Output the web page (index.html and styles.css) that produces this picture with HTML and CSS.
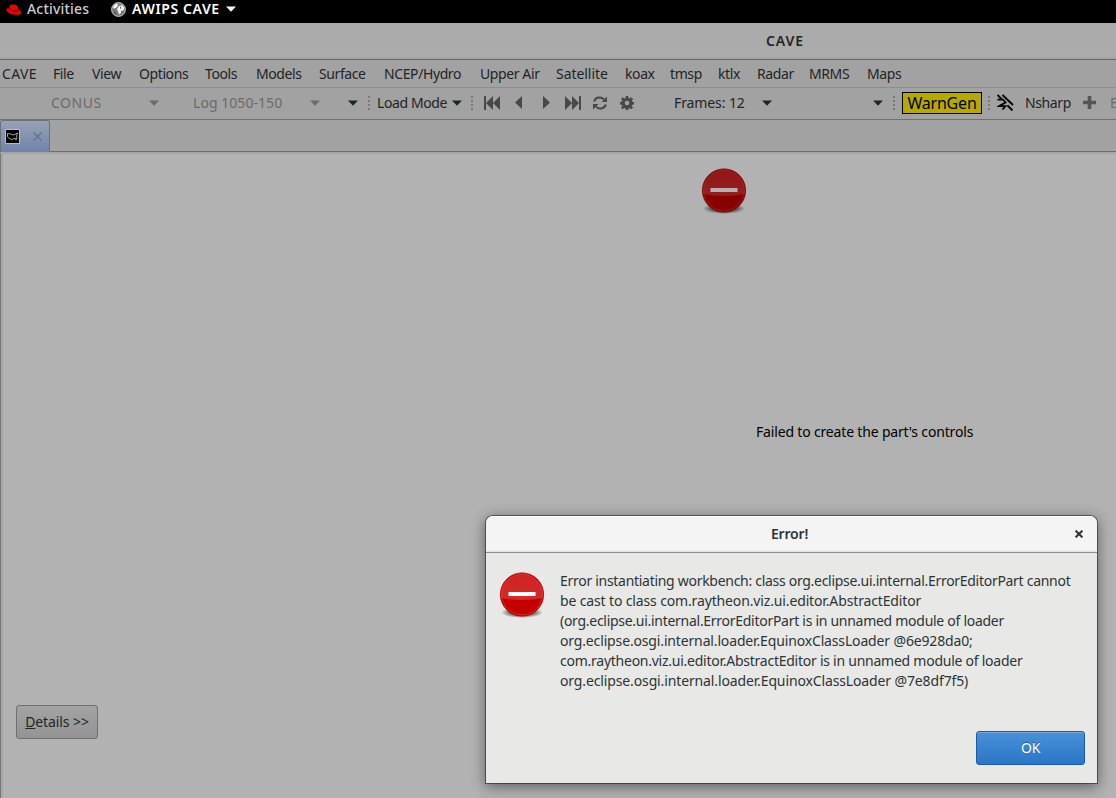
FILE: index.html
```html
<!DOCTYPE html>
<html lang="en">
<head>
<meta charset="utf-8">
<title>CAVE</title>
<link rel="stylesheet" href="styles.css">
</head>
<body>
<svg class="defs" width="0" height="0">
  <defs>
    <linearGradient id="red" x1="0" y1="0" x2="0" y2="1"><stop offset="0" stop-color="#d02222"/><stop offset="1" stop-color="#d62a2a"/></linearGradient>
    <radialGradient id="shade"><stop offset="0.6" stop-color="#000" stop-opacity=".5"/><stop offset="1" stop-color="#000" stop-opacity="0"/></radialGradient>
    <symbol id="stop" viewBox="0 0 46 48">
      <ellipse cx="23" cy="41.500" rx="21" ry="5.500" fill="url(#shade)"/>
      <circle cx="23" cy="23.500" r="21.600" fill="#c40000" stroke="#a60000" stroke-width=".8"/>
      <path d="M2.200 27a21 21 0 1 1 41.600 0Q23 31 2.200 27z" fill="url(#red)"/>
      <circle cx="23" cy="23.500" r="20.400" fill="none" stroke="#e54848" stroke-opacity=".6" stroke-width=".9"/>
      <path d="M9.500 21h27v4h-27z" fill="#fff"/>
    </symbol>
    <symbol id="down" viewBox="0 0 10 6"><path d="M0 .5h10L5 5.800z" fill="currentColor"/></symbol>
  </defs>
</svg>
<div class="screen">
  <header class="topbar">
    <svg class="hat" width="16" height="12" viewBox="0 0 16 12"><path d="M4 1.200C5 .2 6 .6 7 .9c1-.7 3-.6 4 .6.700 1 1 2.500 1.300 4 2 .6 3.200 2 2.900 3.300-.4 1.800-3.700 2.500-7.500 1.800C3.600 9.800.2 7.700.3 5.600.4 4.600 1.600 4.200 3 4.200z" fill="#e00"/><path d="M3.100 4.500c1.300 2 5.800 3.400 8.900 2.500" fill="none" stroke="#300" stroke-width=".8"/></svg>
    <span class="t activities">Activities</span>
    <svg class="globe" width="15" height="15" viewBox="0 0 15 15"><circle cx="7.500" cy="7.500" r="6.900" fill="#777" stroke="#ccc"/><path d="M3 3l3-1.500 1 1.500-1 2-2 1.500L2 6zM8 4l3-1 2.500 3-1.500 3-2-.5V11l-2 1.500-1-3L6 7z" fill="#f4f4f4"/><path d="M3 9l2 2-1 1.200zM9 4l1 2-1 1z" fill="#333"/></svg>
    <span class="t app">AWIPS CAVE</span>
    <svg class="arrow" width="10" height="6"><use href="#down"/></svg>
  </header>
  <div class="titlebar"><span class="t">CAVE</span></div>
  <nav class="menu">
    <span class="t m1">CAVE</span><span class="t">File</span><span class="t">View</span><span class="t">Options</span><span class="t">Tools</span><span class="t">Models</span><span class="t">Surface</span><span class="t">NCEP/Hydro</span><span class="t">Upper Air</span><span class="t m10">Satellite</span><span class="t">koax</span><span class="t">tmsp</span><span class="t">ktlx</span><span class="t">Radar</span><span class="t">MRMS</span><span class="t">Maps</span>
  </nav>
  <div class="toolbar">
    <span class="t dim conus">CONUS</span>
    <svg class="dim" width="10" height="6"><use href="#down"/></svg>
    <span class="t dim log">Log 1050-150</span>
    <svg class="dim" width="10" height="6"><use href="#down"/></svg>
    <svg width="10" height="6"><use href="#down"/></svg>
    <i class="grip"></i>
    <span class="t load">Load Mode</span>
    <svg width="10" height="6"><use href="#down"/></svg>
    <i class="grip"></i>
    <svg class="tool" width="16" height="14" viewBox="0 0 16 14"><path d="M0 0h2v14H0zM9 0v14L2 7zM16 0v14L9 7z"/></svg>
    <svg class="tool" width="7" height="13" viewBox="0 0 7 13"><path d="M7 0v13L0 6.500z"/></svg>
    <svg class="tool" width="7" height="13" viewBox="0 0 7 13"><path d="M0 0v13l7-6.500z"/></svg>
    <svg class="tool" width="16" height="14" viewBox="0 0 16 14"><path d="M16 0h-2v14h2zM7 0v14l7-7zM0 0v14l7-7z"/></svg>
    <svg class="tool" width="14" height="14" viewBox="0 0 14 14"><path d="M1.200 5.500C2.400 1 8 .2 11 3.400M12.800 8.500C11.600 13 6 13.800 3 10.600" fill="none" stroke="#484848" stroke-width="2.100"/><path d="M14 .5v5.500H8.500zM0 13.500V8h5.500z"/></svg>
    <svg class="tool" width="14" height="14" viewBox="0 0 14 14"><path fill-rule="evenodd" d="M5.800 0h2.400l.4 1.900 1.200.5L11.400 1.300l1.700 1.700-1.200 1.600.5 1.200 1.600.3v2.300l-1.700.4-.5 1.200 1.200 1.700-1.700 1.600-1.600-1.200-1.200.5-.3 1.400H5.900l-.4-1.500-1.200-.5-1.700 1.200L1 11.600l1.200-1.700-.5-1.100L0 8.400V6l1.700-.3.500-1.200L1 3l1.700-1.700 1.600 1.100 1.200-.5zM7 4.700A2.300 2.300 0 1 0 7 9.300 2.300 2.300 0 1 0 7 4.700z"/></svg>
    <span class="t frames">Frames: 12</span>
    <svg width="10" height="6"><use href="#down"/></svg>
    <svg width="10" height="6"><use href="#down"/></svg>
    <i class="grip"></i>
    <span class="t warngen">WarnGen</span>
    <i class="grip"></i>
    <svg width="17" height="17" viewBox="0 0 17 17"><path d="M.5 1L5 5.500M5.500 1L16 11M.5 5.700h5.500L8.500 8.500 2 12.200h6.500L5.500 15.500M10.500 11.500l5 5" fill="none" stroke="#000" stroke-width="1.800"/></svg>
    <span class="t nsharp">Nsharp</span>
    <svg class="tool" width="13" height="13" viewBox="0 0 13 13"><path d="M4.700 0h3.600v4.700H13v3.600H8.300V13H4.700V8.300H0V4.700h4.700z" fill="#555"/></svg>
    <span class="t dim">B</span>
  </div>
  <div class="tabs">
    <div class="tab">
      <svg width="15" height="15" viewBox="0 0 15 15"><path d="M.5.500h14v14H.5z" fill="#000" stroke="#bbb"/><path d="M2.500 4.500l3 .5 3 1 2-1 2-1-1 3 .5 2-1 2-1-2-2 1-1 .5-3-1-1.500-2z" fill="none" stroke="#c8c8c8" stroke-width=".8"/></svg>
      <svg width="9" height="9" viewBox="0 0 9 9"><path d="M.5.500l8 8M8.500.500l-8 8" stroke="#65707f" stroke-width="1.100"/></svg>
    </div>
  </div>
  <main class="part">
    <svg class="part-icon" width="46" height="48"><use href="#stop"/></svg>
    <p class="t part-msg">Failed to create the part's controls</p>
    <button class="details"><span class="t"><u>D</u>etails &gt;&gt;</span></button>
  </main>
</div>
<section class="dialog">
  <div class="dialog-title">
    <span class="t">Error!</span>
    <svg width="8" height="8" viewBox="0 0 8 8"><path d="M.6.600l6.800 6.800M7.400.600L.6 7.400" stroke="#2e3436" stroke-width="2"/></svg>
  </div>
  <div class="dialog-body">
    <svg width="46" height="48"><use href="#stop"/></svg>
    <div class="lines">
      <span class="t l1">Error instantiating workbench: class org.eclipse.ui.internal.ErrorEditorPart cannot</span>
      <span class="t l2">be cast to class com.raytheon.viz.ui.editor.AbstractEditor</span>
      <span class="t l3">(org.eclipse.ui.internal.ErrorEditorPart is in unnamed module of loader</span>
      <span class="t l4">org.eclipse.osgi.internal.loader.EquinoxClassLoader @6e928da0;</span>
      <span class="t l5">com.raytheon.viz.ui.editor.AbstractEditor is in unnamed module of loader</span>
      <span class="t l6">org.eclipse.osgi.internal.loader.EquinoxClassLoader @7e8df7f5)</span>
    </div>
  </div>
  <button class="ok"><span class="t">OK</span></button>
</section>
</body>
</html>
```
FILE: styles.css
```css
* { box-sizing: border-box; }
body { margin: 0; width: 1116px; height: 798px; overflow: hidden; font: 14px/20px "Noto Sans", "Open Sans", sans-serif; color: #1f2426; background: #b2b2b2; }
svg { display: block; flex: none; }
.defs { position: absolute; }
.t { white-space: nowrap; letter-spacing: -0.4px; }
.screen { display: flex; flex-direction: column; height: 798px; }
.topbar { height: 23px; flex: none; background: #000; color: #ccc; display: flex; align-items: center; padding: 0 0 5px 6px; font-weight: 500; }
.hat { margin-top: 2px; }
.activities { width: 84px; margin-left: 5px; letter-spacing: 0.2px; }
.app { color: #fff; font-weight: 600; width: 90px; margin-left: 6px; letter-spacing: 0.6px; }
.arrow { color: #fff; margin-left: 4px; }
.titlebar { height: 37px; flex: none; background: linear-gradient(#aaa, #acacac 92%, #a2a2a2); border-bottom: 1px solid #656565; padding: 8px 0 0 766px; font-weight: 600; }
.titlebar .t { letter-spacing: 0.9px; }
.menu { height: 28px; flex: none; background: #a2a2a2; border-bottom: 1px solid #8d8d8d; display: grid; padding-left: 2px; align-items: center; grid-template-columns: 51px 39px 47px 66px 51px 63px 65px 96px 76px 69px 45px 48px 39px 52px 58px 60px; }
.menu .m1 { letter-spacing: 0.4px; }
.menu .m10 { letter-spacing: -0.05px; }
.toolbar { height: 32px; flex: none; overflow: hidden; background: #a2a2a2; border-bottom: 1px solid #717171; display: grid; padding: 0 0 2px 51px; align-items: center; grid-template-columns: 98px 44px 117px 38px 20px 9px 75px 19px 13px 31px 28px 22px 28px 27px 54px 88px 111px 20px 9px 86px 9px 28px 58px 27px 20px; }
.dim { color: #6b6b6b; }
.conus { letter-spacing: 0.5px; }
.log { letter-spacing: 0.05px; }
.frames { letter-spacing: -0.1px; }
.tool { fill: #484848; }
.grip { width: 2px; height: 14px; background: repeating-linear-gradient(#7b7b75 0 2px, transparent 2px 4px); }
.warngen { width: 80px; height: 22px; border: 1px solid #000; background: #b3a900; color: #000; font-size: 16px; line-height: 21px; text-align: center; letter-spacing: -0.2px; }
.tabs { height: 32px; flex: none; background: #a2a2a2; border-bottom: 1px solid #6d6d6d; }
.tab { width: 50px; height: 32px; border: 1px solid #6d7077; border-bottom: 0; border-radius: 3px 3px 0 0; background: linear-gradient(#98a2b5, #7083ad); display: flex; align-items: center; gap: 13px; padding-left: 4px; }
.part { flex: 1; display: flex; flex-direction: column; align-items: flex-start; border-left: 1px solid #777; border-top: 2px solid #a6a6a6; box-shadow: inset 2px 0 #a6a6a6; background: #b2b2b2; }
.part-icon { margin: 13px 0 0 700px; filter: brightness(.7); }
.part-msg { margin: 207px 0 0 755px; color: #000; height: 20px; letter-spacing: -0.17px; }
.details { margin: 263px 0 0 15px; width: 82px; height: 34px; border: 1px solid #707070; border-radius: 3px; background: linear-gradient(#a3a3a3, #949494); font: inherit; color: inherit; padding: 0; }
.details .t { letter-spacing: -0.1px; }
.dialog { position: absolute; left: 486px; top: 516px; width: 611px; height: 267px; background: #e8e8e6; border-radius: 7px 7px 0 0; box-shadow: 0 0 0 1px rgba(0,0,0,.45), 0 3px 14px 1px rgba(0,0,0,.45); color: #2e3436; display: flex; flex-direction: column; }
.dialog-title { height: 37px; border-bottom: 1px solid #8d8d8a; border-radius: 7px 7px 0 0; background: linear-gradient(#fff 0 1px, #f4f4f4 1px 34px, #ddd); display: flex; justify-content: space-between; align-items: center; padding: 0 14px 0 285px; font-weight: 600; }
.dialog-title .t { letter-spacing: -0.2px; }
.dialog-body { display: flex; gap: 15px; padding: 18px 0 0 13px; height: 178px; }
.lines { display: flex; flex-direction: column; align-items: flex-start; }
.l1 { letter-spacing: -0.29px; }
.l2 { letter-spacing: -0.14px; }
.l3 { letter-spacing: -0.28px; }
.l4 { letter-spacing: -0.15px; }
.l5 { letter-spacing: -0.25px; }
.l6 { letter-spacing: -0.13px; }
.ok { width: 109px; height: 34px; align-self: flex-end; margin-right: 12px; border: 1px solid #1b5da5; border-radius: 3px; background: linear-gradient(#4a90d9, #2a76c6); box-shadow: inset 0 1px #75aae1; color: #fff; font: inherit; text-shadow: 0 -1px #245e9f; padding: 0; }
```
